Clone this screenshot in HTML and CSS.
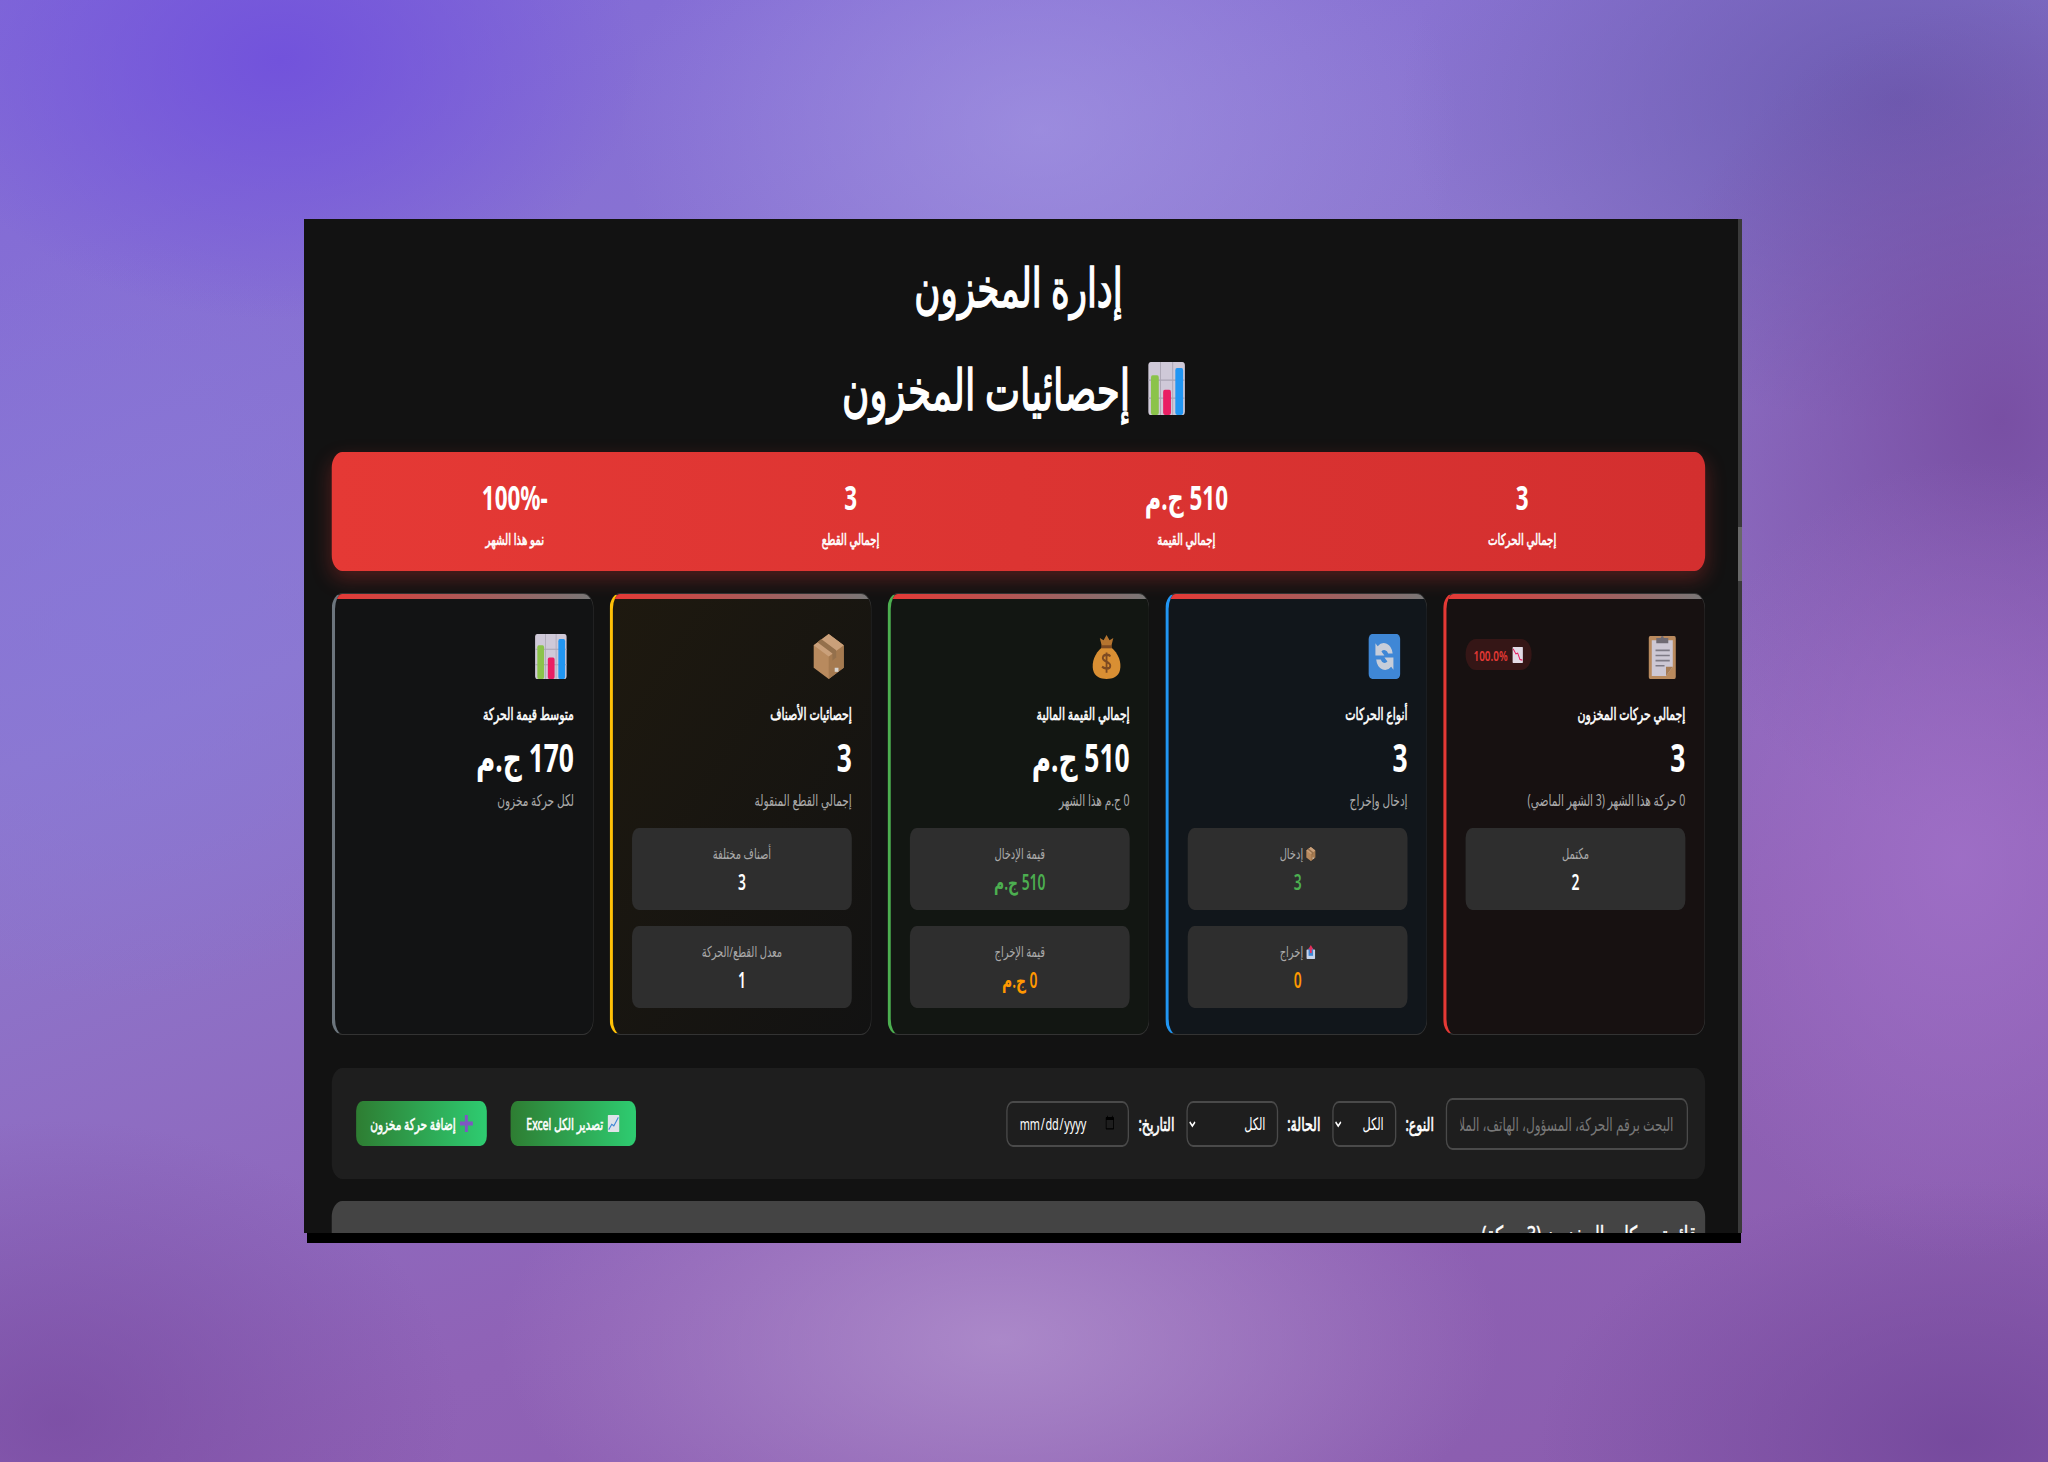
FILE: index.html
```html
<!DOCTYPE html>
<html lang="ar">
<head>
<meta charset="utf-8">
<title>إدارة المخزون</title>
<link rel="stylesheet" href="styles.css">
</head>
<body>
<svg class="defs" width="0" height="0" aria-hidden="true">
  <symbol id="e-bars" viewBox="0 0 44 44" preserveAspectRatio="none">
    <rect x="1" y="0" width="42" height="44" rx="3" fill="#cfc9d8"/>
    <path d="M15 0v44M29 0v44M1 15h42M1 30h42" stroke="#a9a4b3" stroke-width="1"/>
    <rect x="4" y="11" width="9" height="33" rx="2" fill="#8bc34a"/>
    <rect x="18" y="23" width="9" height="21" rx="2" fill="#e91e63"/>
    <rect x="32" y="5" width="9" height="39" rx="2" fill="#2196f3"/>
  </symbol>
  <symbol id="e-clip" viewBox="0 0 44 44" preserveAspectRatio="none">
    <rect x="4" y="2" width="36" height="42" rx="2" fill="#b98a5e"/>
    <path d="M8 6h28v26l-9 9H8z" fill="#cdc8d4"/>
    <path d="M27 41l9-9h-9z" fill="#a77c55"/>
    <path d="M13 16h19M13 21h19M13 26h19M13 31h12" stroke="#7e7a85" stroke-width="1.6"/>
    <path d="M14 9V4h6a2 2 0 0 1 4 0h6v5z" fill="#6f6a73"/>
  </symbol>
  <symbol id="e-sync" viewBox="0 0 44 44" preserveAspectRatio="none">
    <rect x="1" y="0" width="42" height="44" rx="5" fill="#3f87d6"/>
    <path d="M33 19a12 12 0 0 0-20-7l-3-3v12h12l-4-4a6 6 0 0 1 9 2zM11 25a12 12 0 0 0 20 7l3 3V23H22l4 4a6 6 0 0 1-9-2z" fill="#c7cdd9"/>
  </symbol>
  <symbol id="e-bag" viewBox="0 0 44 44" preserveAspectRatio="none">
    <path d="M16 13C6 19 2 28 4 35c2 7 10 9 18 9s16-2 18-9c2-7-2-16-12-22z" fill="#d98f33"/>
    <path d="M16 13l-3-9 5 2 4-5 4 5 5-2-3 9z" fill="#b5742f"/>
    <rect x="15" y="11" width="14" height="3" fill="#7d4a22"/>
    <path d="M27 22c-1-2-9-3-10 1s10 4 10 8-9 3-11 1M22 18v20" fill="none" stroke="#7d4a22" stroke-width="2.4"/>
  </symbol>
  <symbol id="e-box" viewBox="0 0 44 44" preserveAspectRatio="none">
    <path d="M22 0l20 11v22L22 44 2 33V11z" fill="#b88a5e"/>
    <path d="M22 22l20-11v22L22 44z" fill="#a57a50"/>
    <path d="M22 0l20 11-20 11L2 11z" fill="#caa07a"/>
    <path d="M12 5l20 11v7l-5 3v-7L7 8z" fill="#94704c"/>
    <rect x="30" y="33" width="5" height="4" fill="#d8d4d0"/>
  </symbol>
  <symbol id="e-down" viewBox="0 0 44 44" preserveAspectRatio="none">
    <rect x="3" y="0" width="38" height="44" rx="2" fill="#e3dbe6"/>
    <path d="M5 5l10 14 7-2 8 17 9 2" fill="none" stroke="#e91e63" stroke-width="3.4"/>
  </symbol>
  <symbol id="e-up" viewBox="0 0 44 44" preserveAspectRatio="none">
    <rect x="3" y="0" width="38" height="44" rx="2" fill="#dfe3ea"/>
    <path d="M6 38l10-14 7 4 15-22" fill="none" stroke="#3f87d6" stroke-width="3.4"/>
  </symbol>
  <symbol id="e-out" viewBox="0 0 44 44" preserveAspectRatio="none">
    <rect x="3" y="14" width="38" height="30" rx="3" fill="#c7d3ea"/>
    <rect x="12" y="10" width="20" height="24" fill="#3f87d6"/>
    <path d="M22 0l11 13h-7v12h-8V13h-7z" fill="#e5305b"/>
  </symbol>
  <symbol id="e-plus" viewBox="0 0 44 44" preserveAspectRatio="none">
    <path d="M17 0h10v17h17v10H27v17H17V27H0V17h17z" fill="#7e57c2"/>
  </symbol>
</svg>

<div class="frame">
  <div class="window">
    <main class="page">
      <h1 class="title">إدارة المخزون</h1>
      <h2 class="heading"><svg class="ico-heading"><use href="#e-bars"/></svg><span>إحصائيات المخزون</span></h2>

      <section class="banner">
        <div class="banner-item"><div class="banner-value">3</div><div class="banner-label">إجمالي الحركات</div></div>
        <div class="banner-item"><div class="banner-value">510 ج.م</div><div class="banner-label">إجمالي القيمة</div></div>
        <div class="banner-item"><div class="banner-value">3</div><div class="banner-label">إجمالي القطع</div></div>
        <div class="banner-item"><div class="banner-value">-100%</div><div class="banner-label">نمو هذا الشهر</div></div>
      </section>

      <section class="cards">
        <article class="card card-red">
          <div class="card-top">
            <svg class="ico-card"><use href="#e-clip"/></svg>
            <span class="trend">100.0% <svg class="ico-trend"><use href="#e-down"/></svg></span>
          </div>
          <h3 class="card-title">إجمالي حركات المخزون</h3>
          <div class="card-value">3</div>
          <p class="card-note">0 حركة هذا الشهر (3 الشهر الماضي)</p>
          <div class="mini"><div class="mini-label">مكتمل</div><div class="mini-value">2</div></div>
        </article>

        <article class="card card-blue">
          <div class="card-top"><svg class="ico-card"><use href="#e-sync"/></svg></div>
          <h3 class="card-title">أنواع الحركات</h3>
          <div class="card-value">3</div>
          <p class="card-note">إدخال وإخراج</p>
          <div class="mini"><div class="mini-label"><svg class="ico-mini"><use href="#e-box"/></svg> إدخال</div><div class="mini-value green">3</div></div>
          <div class="mini"><div class="mini-label"><svg class="ico-mini"><use href="#e-out"/></svg> إخراج</div><div class="mini-value orange">0</div></div>
        </article>

        <article class="card card-green">
          <div class="card-top"><svg class="ico-card"><use href="#e-bag"/></svg></div>
          <h3 class="card-title">إجمالي القيمة المالية</h3>
          <div class="card-value">510 ج.م</div>
          <p class="card-note">0 ج.م هذا الشهر</p>
          <div class="mini"><div class="mini-label">قيمة الإدخال</div><div class="mini-value green">510 ج.م</div></div>
          <div class="mini"><div class="mini-label">قيمة الإخراج</div><div class="mini-value orange">0 ج.م</div></div>
        </article>

        <article class="card card-yellow">
          <div class="card-top"><svg class="ico-card"><use href="#e-box"/></svg></div>
          <h3 class="card-title">إحصائيات الأصناف</h3>
          <div class="card-value">3</div>
          <p class="card-note">إجمالي القطع المنقولة</p>
          <div class="mini"><div class="mini-label">أصناف مختلفة</div><div class="mini-value">3</div></div>
          <div class="mini"><div class="mini-label">معدل القطع/الحركة</div><div class="mini-value">1</div></div>
        </article>

        <article class="card card-grey">
          <div class="card-top"><svg class="ico-card"><use href="#e-bars"/></svg></div>
          <h3 class="card-title">متوسط قيمة الحركة</h3>
          <div class="card-value">170 ج.م</div>
          <p class="card-note">لكل حركة مخزون</p>
        </article>
      </section>

      <section class="toolbar">
        <div class="filters">
          <input class="search" type="text" placeholder="البحث برقم الحركة، المسؤول، الهاتف، الملاحظات">
          <label class="field">النوع:
            <select class="select select-type"><option>الكل</option></select>
          </label>
          <label class="field">الحالة:
            <select class="select select-status"><option>الكل</option></select>
          </label>
          <label class="field">التاريخ:
            <input class="date" type="date">
          </label>
        </div>
        <div class="actions">
          <button class="btn btn-export" type="button"><svg class="ico-btn"><use href="#e-up"/></svg> تصدير الكل Excel</button>
          <button class="btn btn-add" type="button"><svg class="ico-btn"><use href="#e-plus"/></svg> إضافة حركة مخزون</button>
        </div>
      </section>

      <section class="list">
        <h3 class="list-title">قائمة حركات المخزون (3 حركة)</h3>
      </section>
    </main>
  </div>
  <div class="scrollbar"><div class="thumb"></div></div>
</div>
<div class="under"></div>
</body>
</html>
```
FILE: styles.css
```css
* { box-sizing: border-box; }
html, body { margin: 0; height: 100%; }
body {
  height: 1462px;
  overflow: hidden;
  padding: 219px 0 0 304px;
  font-family: "Noto Sans", "Open Sans", "DejaVu Sans", sans-serif;
  background:
    radial-gradient(ellipse 420px 300px at 1040px 130px, rgba(168,156,230,.6), transparent),
    radial-gradient(ellipse 500px 260px at 1000px 1340px, rgba(178,146,206,.8), transparent),
    radial-gradient(ellipse 300px 400px at 1960px 860px, rgba(160,112,200,.85), transparent),
    radial-gradient(ellipse 360px 420px at 2000px 420px, rgba(118,76,160,.9), transparent),
    radial-gradient(ellipse 500px 320px at 1900px 100px, rgba(100,84,170,.8), transparent),
    radial-gradient(ellipse 420px 260px at 1960px 1440px, rgba(116,72,156,.9), transparent),
    radial-gradient(ellipse 360px 260px at 280px 60px, rgba(112,80,220,.9), transparent),
    radial-gradient(ellipse 380px 380px at 120px 620px, rgba(136,120,216,.75), transparent),
    radial-gradient(ellipse 400px 300px at 60px 1420px, rgba(118,72,158,.7), transparent),
    linear-gradient(160deg, #8068d8 0%, #8d78cf 35%, #8f62b6 70%, #8a5cad 100%);
}
.defs { position: absolute; }

.frame { display: flex; width: 1438px; height: 1014px; }
.window { width: 1434px; height: 1014px; overflow: hidden; background: #121212; }
.scrollbar { width: 4px; background: #3a3a3a; padding-top: 308px; }
.thumb { height: 54px; background: #686868; }
.under { width: 1434px; height: 10px; margin-left: 3px; background: #000; }

.page {
  direction: rtl;
  width: 2173px;
  padding: 0 50px 0 42px;
  transform: scaleX(.66);
  transform-origin: left top;
  color: #fff;
}
.title {
  margin: 0;
  padding-top: 32px;
  height: 124px;
  font-size: 54px;
  line-height: 70px;
  font-weight: 400;
  -webkit-text-stroke: 1.6px #fff;
  text-align: center;
}
.heading {
  display: flex;
  justify-content: center;
  align-items: center;
  gap: 26px;
  margin: 0;
  height: 109px;
  padding: 0 14px 18px 0;
  font-size: 56.5px;
  line-height: 90px;
  font-weight: 400;
  -webkit-text-stroke: 1.6px #fff;
}
.ico-heading { width: 58px; height: 53px; }

.banner {
  display: grid;
  grid-template-columns: repeat(4, 1fr);
  height: 119px;
  padding: 25px 23px 0;
  border-radius: 16px;
  background: linear-gradient(90deg, #e53935, #d32f2f);
  box-shadow: 0 8px 25px rgba(229,57,53,.3);
  text-align: center;
}
.banner-value { font-size: 34px; line-height: 40px; font-weight: 700; }
.banner-label { margin-top: 12px; font-size: 15.5px; line-height: 20px; -webkit-text-stroke: .6px #fff; }

.cards {
  display: grid;
  grid-template-columns: repeat(5, 1fr);
  gap: 24px;
  margin-top: 22px;
  height: 442px;
}
.card {
  position: relative;
  overflow: hidden;
  padding: 40px 29px 24px 29px;
  border: 1px solid #333;
  border-left: 5px solid #6c757d;
  border-radius: 16px;
  background: #121212;
}
.card::before {
  content: "";
  position: absolute;
  top: 0; left: 0; right: 0;
  height: 5px;
  background: linear-gradient(90deg, #e53935, #777);
}
.card-red { border-left-color: #e53935; background: #171111; }
.card-blue { border-left-color: #2196f3; background: #11161b; }
.card-green { border-left-color: #4caf50; background: #121612; }
.card-yellow { border-left-color: #ffc107; background: linear-gradient(135deg, #1e190f, #121212); }
.card-grey { background: #121314; }

.card-top { display: flex; justify-content: space-between; align-items: center; height: 45px; padding-right: 10px; }
.ico-card { width: 50px; height: 45px; }
.trend {
  direction: ltr;
  display: flex;
  align-items: center;
  gap: 6px;
  height: 31px;
  margin-bottom: 4px;
  padding: 0 12px;
  border-radius: 16px;
  background: rgba(229,57,53,.15);
  color: #e53935;
  font-size: 15px;
  font-weight: 600;
}
.ico-trend { width: 18px; height: 16px; }
.card-title { margin: 22px 0 0; font-size: 16.5px; line-height: 26px; font-weight: 400; -webkit-text-stroke: .6px #fff; }
.card-value { margin-top: 5px; font-size: 40px; line-height: 50px; font-weight: 700; }
.card-note { margin: 5px 0 15px; font-size: 16px; line-height: 26px; color: #aaa; }
.mini {
  height: 82px;
  margin-bottom: 16px;
  padding-top: 15px;
  border-radius: 10px;
  background: #2e2e2e;
  text-align: center;
}
.mini-label { font-size: 15px; line-height: 20px; color: #aaa; }
.ico-mini { width: 15px; height: 14px; vertical-align: -2px; }
.mini-value { margin-top: 4px; font-size: 21px; line-height: 30px; font-weight: 600; }
.green { color: #4caf50; }
.orange { color: #ff9800; }

.toolbar {
  display: flex;
  justify-content: space-between;
  align-items: center;
  margin-top: 33px;
  height: 111px;
  padding: 0 26px 0 37px;
  border-radius: 16px;
  background: #1e1e1e;
}
.filters, .actions, .field { display: flex; align-items: center; }
.filters { gap: 18px; }
.actions { gap: 36px; }
.field { gap: 14px; font-size: 19px; -webkit-text-stroke: .7px #fff; }
.search, .select, .date {
  border: 2px solid #4a4a4a;
  border-radius: 10px;
  background: #1e1e1e;
  color: #fff;
  font-family: inherit;
  font-size: 17px;
  -webkit-text-stroke: 0;
}
.search { width: 367px; height: 52px; padding: 0 20px; font-size: 18.4px; }
.search::placeholder { color: #777; }
.select { height: 46px; padding: 0 13px; }
.select-type { width: 97px; }
.select-status { width: 139px; }
.date { width: 186px; height: 46px; padding: 0 17px; direction: ltr; font-size: 16.5px; }

.btn {
  display: flex;
  align-items: center;
  justify-content: center;
  gap: 6px;
  height: 45px;
  padding: 0 8px;
  border: 0;
  border-radius: 10px;
  background: linear-gradient(90deg, #2e7d32, #2ecc71);
  color: #fff;
  font-family: inherit;
  font-size: 16px;
  -webkit-text-stroke: .6px #fff;
  white-space: nowrap;
}
.btn-export { width: 190px; }
.btn-add { width: 198px; }
.ico-btn { width: 20px; height: 17px; }

.list {
  margin-top: 22px;
  height: 200px;
  padding: 19px 13px;
  border-radius: 16px;
  background: #444;
}
.list-title { margin: 0; font-size: 25px; line-height: 28px; font-weight: 400; -webkit-text-stroke: .5px #fff; }
```
